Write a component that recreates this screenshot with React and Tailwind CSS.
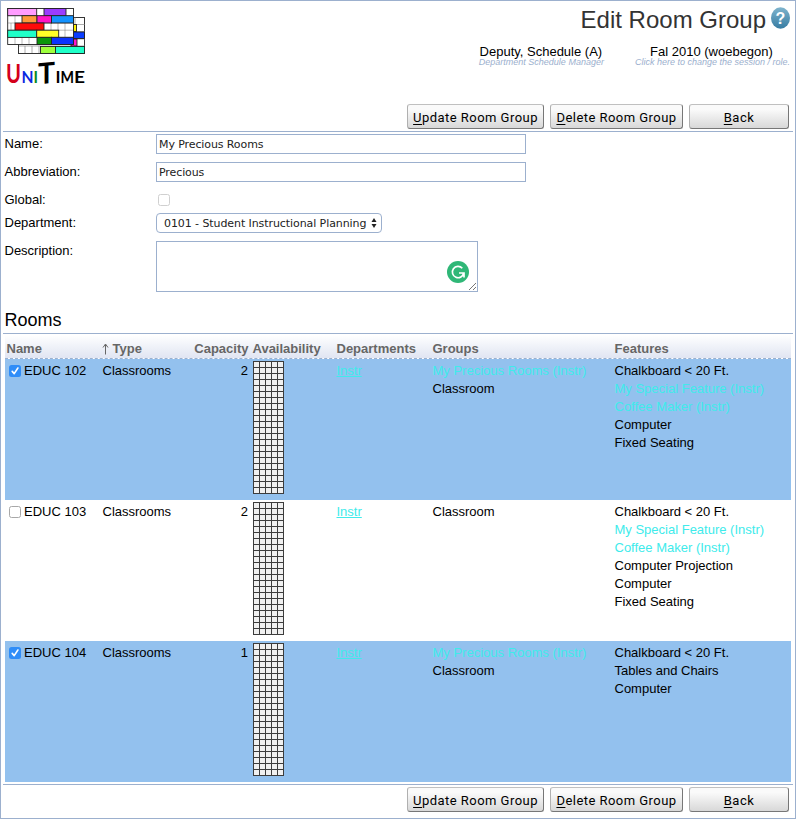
import React from "react";

const ROOMS = [
  {
    name: "EDUC 102", checked: true, type: "Classrooms", capacity: 2, dept: "Instr",
    groups: [["My Precious Rooms (Instr)", true], ["Classroom"]],
    features: [["Chalkboard < 20 Ft."], ["My Special Feature (Instr)", true], ["Coffee Maker (Instr)", true], ["Computer"], ["Fixed Seating"]],
  },
  {
    name: "EDUC 103", checked: false, type: "Classrooms", capacity: 2, dept: "Instr",
    groups: [["Classroom"]],
    features: [["Chalkboard < 20 Ft."], ["My Special Feature (Instr)", true], ["Coffee Maker (Instr)", true], ["Computer Projection"], ["Computer"], ["Fixed Seating"]],
  },
  {
    name: "EDUC 104", checked: true, type: "Classrooms", capacity: 1, dept: "Instr",
    groups: [["My Precious Rooms (Instr)", true], ["Classroom"]],
    features: [["Chalkboard < 20 Ft."], ["Tables and Chairs"], ["Computer"]],
  },
];

const COLS = "grid grid-cols-[96px_89px_60px_84px_96px_182px_179px]";

function Logo() {
  const back = { stroke: "#222", strokeWidth: 0.9 };
  return (
    <svg width="80" height="84" viewBox="0 0 80 84" className="block overflow-visible">
      <g {...back}>
        <rect x="11.5" y="12.500" width="66" height="36" fill="#fff" />
        <path d="M18 41v7M25 41v7M32 41v7M68 12v14M78 19.500H66M78 26.500H66M78 34H66M12 41H78" strokeWidth="0.6" stroke="#777" />
        <rect x="66" y="19.500" width="3.500" height="7" fill="#fff200" />
        <rect x="66" y="27" width="11.500" height="6.500" fill="#0a3cff" />
        <rect x="64" y="34" width="6" height="7" fill="#ff14c8" />
        <rect x="33.500" y="41.500" width="15" height="7" fill="#9dff3c" />
        <rect x="48.500" y="41.500" width="29" height="7" fill="#1fffc8" />
      </g>
      <g {...back}>
        <rect x="0.700" y="3.500" width="65.800" height="36" fill="#fff" />
        <path d="M1 10.700H66M1 18H66M1 25.200H66M1 32.300H66M8 11v7M4 18v7M44 18v7M51 18v7M58 18v7M58 25v7M8 32v7M15 32v7M22 32v7" strokeWidth="0.5" stroke="#777" />
        <rect x="0.700" y="3.500" width="29" height="7.200" fill="#ff9cff" />
        <rect x="37" y="3.500" width="22" height="7.200" fill="#9a3cff" />
        <rect x="15" y="10.700" width="15" height="7.300" fill="#ff9a3c" />
        <rect x="30" y="10.700" width="14.500" height="7.300" fill="#ff14c8" />
        <rect x="44.500" y="10.700" width="22" height="7.300" fill="#1493ff" />
        <rect x="8" y="18" width="29" height="7.200" fill="#ff0a0a" />
        <rect x="0.700" y="25.200" width="29" height="7.200" fill="#1fffc8" />
        <rect x="29.700" y="25.200" width="22" height="7.200" fill="#ffff28" />
        <rect x="30" y="32.300" width="14.500" height="7.200" fill="#0a960a" />
        <rect x="44.500" y="32.300" width="22" height="7.200" fill="#0a32ff" />
      </g>
      <g fontFamily="Lato, sans-serif" fontWeight="700">
        <text x="-1" y="78" fontSize="27" fill="#d4001a" textLength="15" lengthAdjust="spacingAndGlyphs">U</text>
        <text x="14.500" y="77.500" fontSize="17" fill="#0a28e0" textLength="12" lengthAdjust="spacingAndGlyphs">N</text>
        <text x="26.500" y="77.500" fontSize="17" fill="#0a8a1e" textLength="4.500" lengthAdjust="spacingAndGlyphs">I</text>
        <text x="31" y="78.500" fontSize="29" fill="#000" textLength="17" lengthAdjust="spacingAndGlyphs" transform="skewY(-5) translate(0 3.500)">T</text>
        <text x="48.500" y="77.500" fontSize="17" fill="#000" textLength="5" lengthAdjust="spacingAndGlyphs">I</text>
        <text x="53.500" y="77.500" fontSize="17" fill="#000" textLength="13.500" lengthAdjust="spacingAndGlyphs">M</text>
        <text x="67" y="77.500" fontSize="17.500" fill="#000" textLength="11" lengthAdjust="spacingAndGlyphs">E</text>
      </g>
    </svg>
  );
}

function Btn({ first, rest, className }) {
  return (
    <button className={`${className} h-[25px] rounded-[3px] border border-t-[#c0c0c0] border-l-[#b0b0b0] border-r-[#777] border-b-[#777] bg-linear-to-b from-[#fafafa] from-20% to-[#d8d8d8] p-0 pt-[2px] text-center font-[Roboto,sans-serif] text-[13px] leading-[21px] tracking-[0.46px] whitespace-nowrap text-black`}>
      <span className="underline underline-offset-2">{first}</span>{rest}
    </button>
  );
}

function Buttons() {
  return (
    <div className="flex justify-end gap-[6px] pr-[6px]">
      <Btn className="w-[137px]" first="U" rest="pdate Room Group" />
      <Btn className="w-[133px]" first="D" rest="elete Room Group" />
      <Btn className="w-[100px]" first="B" rest="ack" />
    </div>
  );
}

function Check({ checked, faint }) {
  if (checked) {
    return (
      <span className="flex size-3 shrink-0 items-center justify-center rounded-[2.5px] bg-[#2f8df8]">
        <svg width="10" height="10" viewBox="0 0 10 10" fill="none" stroke="#fff" strokeWidth="1.600" strokeLinecap="round" strokeLinejoin="round"><path d="M2.200 5.400 4.200 7.600 7.900 2" /></svg>
      </span>
    );
  }
  return <span className={`block size-3 shrink-0 rounded-[2.5px] border bg-white ${faint ? "border-[#d0d0d0]" : "border-[#a8a8a8]"}`} />;
}

function Availability() {
  return (
    <div className="mt-[2px] grid h-[133px] w-[31px] grid-cols-5 border-t border-l border-[#3c3c3c] bg-[#f0f0f0]">
      {Array.from({ length: 110 }, (_, i) => (
        <div key={i} className="size-[6px] border-r border-b border-[#3c3c3c]" />
      ))}
    </div>
  );
}

function Lines({ items }) {
  return (
    <div className="pt-[3px]">
      {items.map(([text, own]) => (
        <div key={text} className={`leading-[18px] ${own ? "text-[#40ebeb]" : ""}`}>{text}</div>
      ))}
    </div>
  );
}

function Field({ label, className, children }) {
  return (
    <div className={`flex ${className}`}>
      <div className="w-[153px] shrink-0 pt-px pl-[1.5px] leading-[18px]">{label}</div>
      {children}
    </div>
  );
}

export default function App() {
  const input = "h-5 w-[370px] border border-[#9cb0ce] bg-white px-[2px] pt-px pb-0 font-['DejaVu_Sans',sans-serif] text-[11px] leading-[17px] tracking-[-0.1px] text-[#222]";
  return (
    <div className="h-[819px] w-[796px] overflow-hidden border border-[#9cb0ce] bg-white pl-[2px] font-['Liberation_Sans',Arial,sans-serif] text-[13px] leading-[18px] text-black">
      <div className="flex h-[103px] justify-between">
        <div className="pt-[4px] pl-[4px]"><Logo /></div>
        <div className="pt-[4px] pr-[5px]">
          <div className="flex h-[29px] items-start justify-end">
            <h1 className="pt-px text-[24px] leading-[28px] text-[#333]">Edit Room Group</h1>
            <svg width="19" height="24" viewBox="0 0 19 24" className="ml-[5px] block">
              <defs>
                <linearGradient id="help" x1="0" y1="0" x2="0" y2="1"><stop offset="0" stopColor="#7fb4cd" /><stop offset="1" stopColor="#377ca2" /></linearGradient>
              </defs>
              <ellipse cx="9.500" cy="13" rx="9.500" ry="10.700" fill="url(#help)" />
              <text x="9.500" y="18.500" textAnchor="middle" fontFamily="Liberation Sans, sans-serif" fontWeight="700" fontSize="16" fill="#fff">?</text>
            </svg>
          </div>
          <div className="mt-[10px] flex justify-end gap-[31px] text-center whitespace-nowrap">
            <div>
              <div className="h-[12px] pr-px leading-[15px]">Deputy, Schedule (A)</div>
              <div className="text-[9px] leading-[12px] text-[#9cb0ce] italic">Department Schedule Manager</div>
            </div>
            <div>
              <div className="h-[12px] pr-[2px] leading-[15px]">Fal 2010 (woebegon)</div>
              <div className="text-[9px] leading-[12px] text-[#9cb0ce] italic">Click here to change the session / role.</div>
            </div>
          </div>
        </div>
      </div>
      <Buttons />
      <div className="mt-[2px] mr-[2px] border-t border-[#9cb0ce]" />

      <div className="pt-[2px]">
        <Field label="Name:" className="h-[28px]"><input className={input} defaultValue="My Precious Rooms" /></Field>
        <Field label="Abbreviation:" className="h-[28px]"><input className={input} defaultValue="Precious" /></Field>
        <Field label="Global:" className="h-[23px]"><div className="pt-[4px] pl-[2px]"><Check faint /></div></Field>
        <Field label="Department:" className="h-[28px]">
          <div className="flex h-5 w-[226px] items-center justify-between rounded-[4px] border border-[#9cb0ce] pr-[4px] pl-[7px] font-['DejaVu_Sans',sans-serif] text-[11px] tracking-[-0.08px] whitespace-nowrap text-[#222]">
            <span className="pt-px">0101 - Student Instructional Planning</span>
            <svg width="6" height="10" viewBox="0 0 6 10" fill="#222"><path d="M3 0 5.500 4H.5zM3 10 .5 6h5z" /></svg>
          </div>
        </Field>
        <Field label="Description:" className="h-[68px]">
          <div className="flex h-[51px] w-[322px] items-end justify-end border border-[#9cb0ce]">
            <svg width="32" height="32" viewBox="0 0 32 32" className="block">
              <circle cx="13" cy="13" r="11" fill="#2fb777" />
              <path d="M17.300 9.200A5.700 5.700 0 1 0 18.700 14M14 14h5v4.500" fill="none" stroke="#fff" strokeWidth="1.700" />
              <path d="M24 31 31 24M28 31l3-3" stroke="#666" strokeWidth="0.900" />
            </svg>
          </div>
        </Field>
      </div>

      <h2 className="h-[24px] pt-[1px] pl-[1.5px] text-[18px] leading-[20px]">Rooms</h2>
      <div className="mr-[2px] border-t border-[#9cb0ce]" />

      <div className="mt-px mr-[4px] ml-[2px]">
        <div className={`${COLS} h-[24px] border-b border-dashed border-[#9cb0ce] bg-linear-to-b from-white to-[#e0e5f2] pt-[5px] font-bold text-[#666]`}>
          <div className="pl-[1.5px]">Name</div>
          <div className="flex"><svg width="8" height="12" viewBox="0 0 8 12" className="mt-[3px] mr-[3.5px]" fill="none" stroke="#666" strokeWidth="1"><path d="M4.500 11.500V1.500M2 4.500 4.500 1 7 4.500" /></svg>Type</div>
          <div className="flex justify-end pr-[1.5px]">Capacity</div>
          <div className="pl-[2.5px]">Availability</div>
          <div className="pl-[2.5px]">Departments</div>
          <div className="pl-[2.5px]">Groups</div>
          <div className="pl-[2.5px]">Features</div>
        </div>
        {ROOMS.map((r) => (
          <div key={r.name} className={`${COLS} h-[141px] ${r.checked ? "bg-[#93c1ee]" : "bg-white"}`}>
            <div className="flex h-[18px] items-center gap-[3px] pt-[6px] pl-[4px] whitespace-nowrap"><Check checked={r.checked} />{r.name}</div>
            <div className="pt-[3px] pl-[1.5px]">{r.type}</div>
            <div className="pt-[3px] pr-[2px] text-right">{r.capacity}</div>
            <div className="pl-[3px]"><Availability /></div>
            <div className="pt-[3px] pl-[2.5px] text-[#40ebeb] underline underline-offset-1">{r.dept}</div>
            <div className="pl-[2.5px]"><Lines items={r.groups} /></div>
            <div className="pl-[2.5px]"><Lines items={r.features} /></div>
          </div>
        ))}
      </div>
      <div className="mt-[2px] mr-[2px] mb-[2px] border-t border-[#9cb0ce]" />
      <Buttons />
    </div>
  );
}
